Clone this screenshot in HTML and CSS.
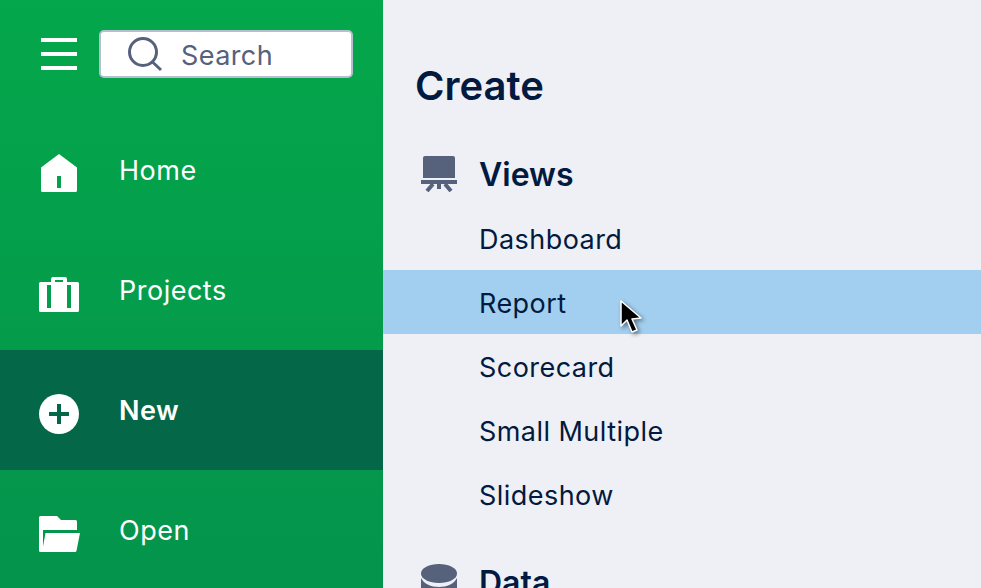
FILE: index.html
```html
<!DOCTYPE html>
<html lang="en">
<head>
<meta charset="utf-8">
<title>Create</title>
<link rel="stylesheet" href="styles.css">
</head>
<body>
<div class="app">
  <aside class="sidebar">
    <div class="top">
      <button class="burger" aria-label="Menu"><span></span><span></span><span></span></button>
      <div class="search">
        <svg class="search-icon" width="36" height="36" viewBox="0 0 36 36"><circle cx="15" cy="16" r="13.500" fill="none" stroke="#56617c" stroke-width="3"/><path d="M24.500 26 L33 34" stroke="#56617c" stroke-width="3" fill="none"/></svg>
        <span class="search-text">Search</span>
      </div>
    </div>
    <nav class="nav">
      <a class="nav-item">
        <svg class="nav-icon" width="42" height="44" viewBox="0 0 42 44"><path fill="#fff" fill-rule="evenodd" d="M21 6 L39 19.500 V42.500 A1.500 1.500 0 0 1 37.500 44 H4.500 A1.500 1.500 0 0 1 3 42.500 V19.500 Z M19 28 V40 H23 V28 Z"/></svg>
        <span>Home</span>
      </a>
      <a class="nav-item">
        <svg class="nav-icon" width="42" height="44" viewBox="0 0 42 44"><path fill="#fff" fill-rule="evenodd" d="M13 14 V11 A2 2 0 0 1 15 9 H27 A2 2 0 0 1 29 11 V14 H39.500 A1.500 1.500 0 0 1 41 15.500 V42.500 A1.500 1.500 0 0 1 39.500 44 H2.500 A1.500 1.500 0 0 1 1 42.500 V15.500 A1.500 1.500 0 0 1 2.500 14 Z M17 12 V14 H25 V12 Z M9 17 V40 H13 V17 Z M29 17 V40 H33 V17 Z"/></svg>
        <span>Projects</span>
      </a>
      <a class="nav-item active">
        <svg class="nav-icon" width="42" height="44" viewBox="0 0 42 44"><circle cx="21" cy="26" r="20" fill="#fff"/><path fill="#036748" d="M19 16 V24 H11 V28 H19 V36 H23 V28 H31 V24 H23 V16 Z"/></svg>
        <span>New</span>
      </a>
      <a class="nav-item">
        <svg class="nav-icon" width="42" height="44" viewBox="0 0 42 44"><path fill="#fff" d="M1 9.500 A1.500 1.500 0 0 1 2.500 8 H19 L23 12 H37.500 A1.500 1.500 0 0 1 39 13.500 V22 H5 V44 H2.500 A1.500 1.500 0 0 1 1 42.500 Z"/><path fill="#fff" d="M7.500 25 H42 L38.500 42.800 A1.500 1.500 0 0 1 37 44 H4 Z"/></svg>
        <span>Open</span>
      </a>
    </nav>
  </aside>
  <main class="panel">
    <h1 class="title">Create</h1>
    <section class="group">
      <h2 class="group-head">
        <svg class="group-icon" width="36" height="36" viewBox="0 0 36 36"><path fill="#56617c" d="M2 2 A2 2 0 0 1 4 0 H32 A2 2 0 0 1 34 2 V22 H2 Z"/><rect fill="#56617c" y="24" width="36" height="4"/><path fill="#56617c" d="M16 28 H20 V33 H16 Z"/><path stroke="#56617c" stroke-width="4" fill="none" d="M12 28 L6 35 M24 28 L30 35"/></svg>
        <span>Views</span>
      </h2>
      <a class="row">Dashboard</a>
      <a class="row hover">Report</a>
      <a class="row">Scorecard</a>
      <a class="row">Small Multiple</a>
      <a class="row">Slideshow</a>
    </section>
    <section class="group">
      <h2 class="group-head">
        <svg class="group-icon" width="36" height="44" viewBox="0 0 36 44"><ellipse fill="#56617c" cx="18" cy="13.500" rx="18" ry="9.500"/><path fill="#56617c" d="M0 18 C3 24 10 27 18 27 S33 24 36 18 V44 H0 Z"/></svg>
        <span>Data</span>
      </h2>
    </section>
    <svg class="cursor" width="26" height="38" viewBox="0 0 26 38"><path fill="#000" stroke="#fff" stroke-width="1.500" stroke-linejoin="round" d="M2 2 V27 L8 21 L13 33 L18 31 L13 20 L22 19 Z"/></svg>
  </main>
</div>
</body>
</html>
```
FILE: styles.css
```css
* { box-sizing: border-box; }
html, body { margin: 0; height: 100%; overflow: hidden; }
body { font-family: Inter, "Liberation Sans", sans-serif; }
.app { display: flex; width: 981px; height: 588px; overflow: hidden; }
.sidebar {
  flex: 0 0 383px;
  height: 588px;
  overflow: hidden;
  background: linear-gradient(180deg, #04a74b 0%, #04944c 100%);
  color: #fff;
}
.top { display: flex; align-items: center; height: 110px; padding: 0 0 2px 41px; gap: 22px; }
.burger {
  display: flex; flex-direction: column; justify-content: space-between;
  width: 36px; height: 32px; padding: 0; border: 0; background: none;
}
.burger span { display: block; height: 4px; background: #fff; }
.search {
  display: flex; align-items: center; gap: 17px;
  width: 254px; height: 48px; padding-left: 27px;
  background: #fff; border: 2px solid #b5bfd0; border-radius: 5px;
}
.search-icon { flex: none; }
.search-text { padding-top: 2px; font-size: 27px; color: #56617c; letter-spacing: 0.4px; }
.nav { display: flex; flex-direction: column; }
.nav-item {
  display: flex; align-items: center; gap: 39px;
  flex: 0 0 120px; padding-left: 38px;
  font-size: 27px; letter-spacing: 0.5px; color: #fff;
}
.nav-item.active { background: #036748; font-weight: 600; }
.nav-icon { flex: none; overflow: visible; }
.panel { position: relative; flex: 1; background: #eef0f5; color: #021a40; overflow: hidden; height: 588px; }
.title { margin: 0; padding: 61px 0 0 32px; height: 142px; font-size: 40px; line-height: 50px; font-weight: 600; }
.group-head {
  display: flex; align-items: center; gap: 22px;
  height: 64px; margin: 0; padding-left: 38px;
  font-size: 32px; font-weight: 600;
}
.group-icon { flex: none; }
.group + .group .group-head { margin-top: 24px; }
.row {
  display: flex; align-items: center;
  height: 64px; padding: 2px 0 0 96px;
  font-size: 27px; letter-spacing: 0.45px;
}
.row.hover { background: #a2cfef; }
.cursor { position: absolute; left: 236px; top: 299px; filter: drop-shadow(2px 2px 2px rgba(0,0,0,.45)); }
```
